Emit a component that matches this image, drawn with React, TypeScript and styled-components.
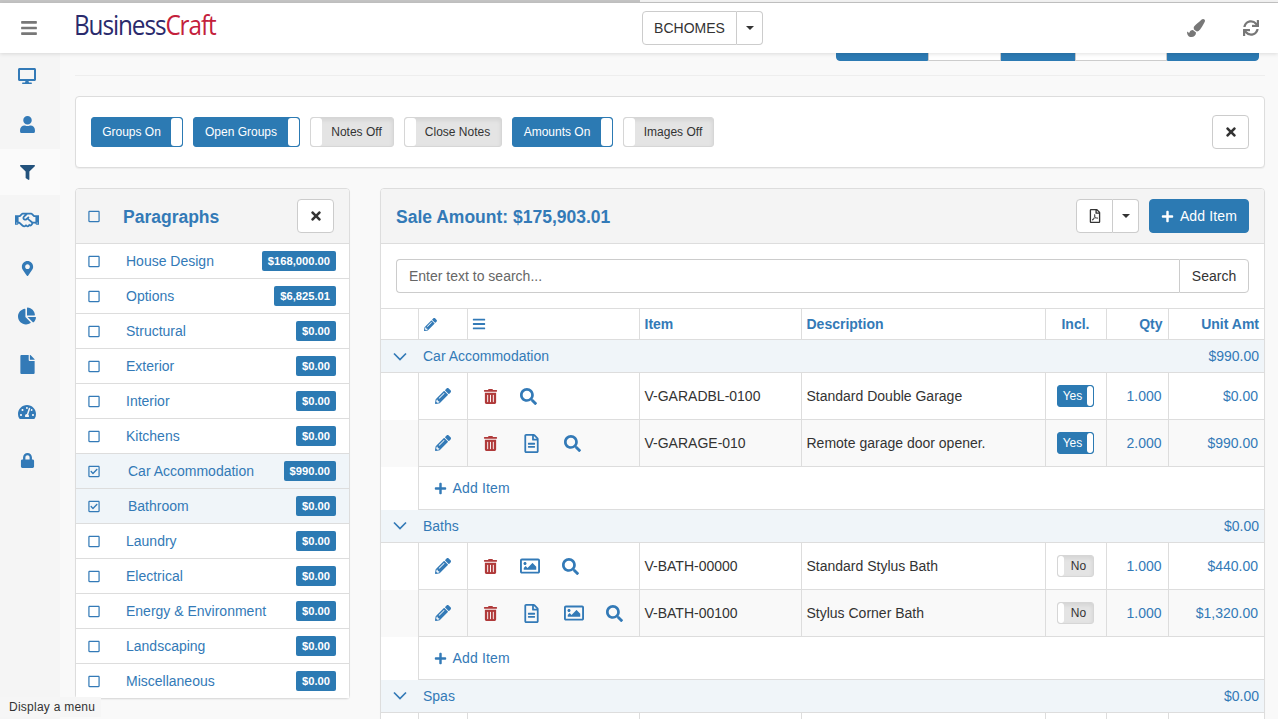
import React from "react";
import styled, { createGlobalStyle } from "styled-components";
import {
  FaBars,
  FaChartPie,
  FaDesktop,
  FaFile,
  FaFilter,
  FaLock,
  FaMapMarkerAlt,
  FaPaintBrush,
  FaPencilAlt,
  FaPlus,
  FaRegCheckSquare,
  FaRegFileAlt,
  FaRegFilePdf,
  FaRegHandshake,
  FaRegImage,
  FaRegSquare,
  FaSearch,
  FaSync,
  FaTachometerAlt,
  FaTimes,
  FaTrashAlt,
  FaUser,
} from "react-icons/fa";

const BLUE = "#2c7ab3";
const LINK = "#337ab7";
const BORDER = "#ddd";

const GlobalStyle = createGlobalStyle`
  html, body {
    margin: 0;
    height: 100%;
    overflow: hidden;
    background: #f9f9f9;
    font-family: "Liberation Sans", Arial, sans-serif;
    font-size: 14px;
    color: #333;
  }
  * { box-sizing: border-box; }
`;

const Page = styled.div`
  height: 100vh;
  display: flex;
  flex-direction: column;
  overflow: hidden;
  position: relative;
`;

const TopStrip = styled.div`
  height: 3px;
  flex: none;
  background: linear-gradient(to right, #c4c4c4 640px, #f2f2f2 640px);
  border-bottom: 1px solid #c4c4c4;
`;

const Navbar = styled.header`
  height: 50px;
  flex: none;
  background: #fff;
  box-shadow: 0 1px 4px rgba(0, 0, 0, 0.12);
  position: relative;
  z-index: 2;
  display: grid;
  grid-template-columns: 622px auto 1fr;
  align-items: center;
  padding: 0 19px 0 20px;
`;

const NavLeft = styled.div`
  display: flex;
  align-items: center;
  gap: 36px;
`;

const NavRight = styled.div`
  display: flex;
  justify-content: flex-end;
  align-items: center;
  gap: 38px;
  color: #777;
  font-size: 18px;
`;

const Burger = styled(FaBars)`
  color: #777;
  font-size: 18px;
`;

const Logo = styled.div`
  font-family: "Open Sans", "Liberation Sans", sans-serif;
  font-size: 27px;
  letter-spacing: -1.2px;
  line-height: 30px;
  margin-top: -6px;
  color: #2a2a6c;
  transform: scaleX(0.9);
  transform-origin: left center;
  & > span {
    color: #c4203b;
  }
`;

const Split = styled.div`
  display: flex;
  height: 34px;
`;

const SplitMain = styled.button<{ $w: number }>`
  width: ${(p) => p.$w}px;
  height: 34px;
  border: 1px solid #ccc;
  border-radius: 4px 0 0 4px;
  background: #fff;
  color: #333;
  font: inherit;
  padding: 0;
  display: flex;
  align-items: center;
  justify-content: center;
`;

const SplitCaret = styled.button`
  width: 26px;
  height: 34px;
  border: 1px solid #ccc;
  border-left: 0;
  border-radius: 0 4px 4px 0;
  background: #fff;
  padding: 0;
  display: flex;
  align-items: center;
  justify-content: center;
  &::after {
    content: "";
    border-top: 4px solid #333;
    border-left: 4px solid transparent;
    border-right: 4px solid transparent;
  }
`;

const Body = styled.div`
  flex: 1;
  min-height: 0;
  display: flex;
`;

const Sidebar = styled.nav`
  width: 60px;
  flex: none;
  background: #f5f5f5;
  margin-top: -2px;
  display: flex;
  flex-direction: column;
`;

const SideItem = styled.a<{ $active?: boolean; $size: number }>`
  height: 48px;
  padding-right: 6px;
  display: flex;
  align-items: center;
  justify-content: center;
  font-size: ${(p) => p.$size}px;
  color: ${(p) => (p.$active ? "#23527c" : LINK)};
  background: ${(p) => (p.$active ? "#fafafa" : "transparent")};
  border-top: 2px solid #f5f5f5;
`;

const Main = styled.main`
  flex: 1;
  min-width: 0;
  padding: 0 13px 0 15px;
`;

const ClippedBar = styled.div`
  height: 8px;
  overflow: hidden;
  display: flex;
  justify-content: flex-end;
  align-items: flex-end;
  padding-right: 6px;
`;

const TopButton = styled.button<{ $w: number; $on?: boolean }>`
  width: ${(p) => p.$w}px;
  height: 34px;
  flex: none;
  border: 1px solid ${(p) => (p.$on ? BLUE : "#ccc")};
  background: ${(p) => (p.$on ? BLUE : "#fff")};
  padding: 0;
  &:first-child {
    border-radius: 0 0 0 4px;
  }
  &:last-child {
    border-radius: 0 0 4px 0;
  }
`;

const Divider = styled.div`
  height: 1px;
  margin-top: 14px;
  background: #eee;
`;

const TogglePanel = styled.section`
  margin-top: 20px;
  height: 72px;
  background: #fff;
  border: 1px solid ${BORDER};
  border-radius: 4px;
  box-shadow: 0 1px 1px rgba(0, 0, 0, 0.05);
  display: flex;
  align-items: center;
  padding: 0 15px;
  gap: 10px;
`;

const Toggle = styled.div<{ $on?: boolean; $small?: boolean }>`
  height: ${(p) => (p.$small ? 22 : 30)}px;
  flex: none;
  display: flex;
  flex-direction: ${(p) => (p.$on ? "row" : "row-reverse")};
  align-items: stretch;
  border: 1px solid ${(p) => (p.$on ? BLUE : "#d6d6d6")};
  border-radius: 3px;
  overflow: hidden;
  font-size: 12px;
  background: ${(p) => (p.$on ? BLUE : "#e4e4e4")};
  color: ${(p) => (p.$on ? "#fff" : "#333")};
  box-shadow: ${(p) => (p.$on ? "none" : "inset 0 2px 4px rgba(0, 0, 0, 0.08)")};
`;

const ToggleText = styled.span<{ $w: number; $nudge?: boolean }>`
  width: ${(p) => p.$w}px;
  padding-right: ${(p) => (p.$nudge ? 2 : 0)}px;
  display: flex;
  align-items: center;
  justify-content: center;
`;

const ToggleHandle = styled.span<{ $small?: boolean }>`
  width: ${(p) => (p.$small ? 6 : 11)}px;
  background: #fff;
  border-radius: 3px;
`;

const Spacer = styled.div`
  flex: 1;
`;

const CloseButton = styled.button`
  width: 37px;
  height: 34px;
  background: #fff;
  border: 1px solid #ccc;
  border-radius: 4px;
  color: #333;
  font-size: 14px;
  padding: 0;
  display: flex;
  align-items: center;
  justify-content: center;
`;

const Columns = styled.div`
  margin-top: 20px;
  display: grid;
  grid-template-columns: 275px 1fr;
  gap: 30px;
  align-items: start;
`;

const Panel = styled.section`
  background: #fff;
  border: 1px solid ${BORDER};
  border-radius: 4px;
  box-shadow: 0 1px 1px rgba(0, 0, 0, 0.05);
`;

const PanelHead = styled.div`
  height: 55px;
  background: #f4f4f4;
  border-bottom: 1px solid ${BORDER};
  border-radius: 3px 3px 0 0;
  display: flex;
  align-items: center;
  padding: 0 15px 0 12px;
`;

const MainHead = styled(PanelHead)`
  padding: 0 15px;
  gap: 10px;
`;

const Title = styled.h3<{ $indent?: number }>`
  margin: 2px 0 0 ${(p) => p.$indent ?? 0}px;
  flex: 1;
  font-size: 17.5px;
  line-height: 20px;
  font-weight: 700;
  color: ${LINK};
`;

const Check = styled.span`
  width: 12px;
  flex: none;
  display: flex;
  color: ${LINK};
  font-size: 13px;
`;

const ParaRow = styled.div<{ $selected?: boolean }>`
  height: 35px;
  display: flex;
  align-items: center;
  padding: 0 13px 0 12px;
  color: ${LINK};
  background: ${(p) => (p.$selected ? "#f0f5f9" : "#fff")};
  border-bottom: 1px solid ${BORDER};
  &:last-child {
    height: 34px;
    border-bottom: 0;
  }
`;

const ParaName = styled.span<{ $selected?: boolean }>`
  flex: 1;
  margin-left: ${(p) => (p.$selected ? 28 : 26)}px;
`;

const Badge = styled.span`
  background: ${BLUE};
  color: #fff;
  font-size: 11.2px;
  font-weight: 700;
  line-height: 20px;
  height: 20px;
  padding: 0 6px;
  border-radius: 2px;
`;

const SearchRow = styled.div`
  padding: 15px;
  display: flex;
  height: 64px;
`;

const SearchInput = styled.input`
  flex: 1;
  min-width: 0;
  height: 34px;
  border: 1px solid #ccc;
  border-right: 0;
  border-radius: 4px 0 0 4px;
  padding: 0 12px;
  font: inherit;
  color: #333;
  background: #fff;
  &::placeholder {
    color: #666;
    opacity: 1;
  }
`;

const SearchButton = styled.button`
  width: 70px;
  height: 34px;
  border: 1px solid #ccc;
  border-radius: 0 4px 4px 0;
  background: #fff;
  color: #333;
  font: inherit;
  padding: 0;
`;

const AddButton = styled.button`
  width: 100px;
  height: 34px;
  border: 1px solid ${BLUE};
  border-radius: 4px;
  background: ${BLUE};
  color: #fff;
  font: inherit;
  letter-spacing: 0.15px;
  padding: 0;
  display: flex;
  align-items: center;
  justify-content: center;
  gap: 6px;
  & > svg {
    font-size: 13px;
  }
`;

const Table = styled.table`
  width: 100%;
  table-layout: fixed;
  border-collapse: collapse;
`;

const Th = styled.th<{ $align?: string }>`
  height: 31px;
  padding: 0 5px;
  border: 1px solid ${BORDER};
  border-left: 0;
  font-size: 14px;
  font-weight: 700;
  color: ${LINK};
  text-align: ${(p) => p.$align ?? "left"};
  &:last-child {
    border-right: 0;
  }
`;

const HeadIcon = styled.span`
  display: flex;
  font-size: 13px;
`;

const HeadBars = styled(FaBars)`
  font-size: 14px;
  margin-left: -1px;
`;

const GroupRow = styled.tr`
  background: #f0f5f9;
  & > td {
    height: 33px;
    padding: 0 5px;
    border-bottom: 1px solid ${BORDER};
    color: ${LINK};
  }
`;

const GroupTotal = styled.td`
  text-align: right;
`;

const Chevron = styled.svg`
  display: block;
  margin-left: 7px;
  width: 14px;
  height: 9px;
`;

const ItemRow = styled.tr<{ $striped?: boolean }>`
  background: ${(p) => (p.$striped ? "#f9f9f9" : "#fff")};
`;

const Td = styled.td<{ $align?: string; $blue?: boolean }>`
  height: 47px;
  padding: 0 ${(p) => (p.$blue ? 6 : 5)}px 0 5px;
  border: 1px solid ${BORDER};
  border-left: 0;
  text-align: ${(p) => p.$align ?? "left"};
  color: ${(p) => (p.$blue ? LINK : "#333")};
  white-space: nowrap;
  &:last-child {
    border-right: 0;
  }
`;

const BlankTd = styled(Td)`
  height: auto;
  border-top: 0;
  border-bottom: 0;
`;

const AddTd = styled(Td)`
  height: 43px;
  padding-left: 15px;
  padding-top: 2px;
  color: ${LINK};
`;

const AddLink = styled.a`
  display: inline-flex;
  align-items: center;
  gap: 6px;
  letter-spacing: 0.15px;
  & > svg {
    font-size: 13px;
  }
`;

const EditIcon = styled.span`
  display: flex;
  justify-content: center;
  color: ${LINK};
  font-size: 16px;
`;

const Actions = styled.div`
  display: flex;
  align-items: center;
  gap: 22px;
  padding-left: 10px;
  font-size: 17px;
  color: ${LINK};
`;

const TrashIcon = styled(FaTrashAlt)`
  color: #b03a3a;
  font-size: 15px;
`;

const NoteIcon = styled(FaRegFileAlt)`
  font-size: 19px;
  margin: 0 1px 0 2px;
`;

const PictureIcon = styled(FaRegImage)`
  font-size: 20px;
`;

const SmallToggleWrap = styled.div`
  display: flex;
  justify-content: center;
`;

const Tooltip = styled.div`
  position: absolute;
  left: 0;
  bottom: 2px;
  height: 20px;
  width: 101px;
  background: #f6f6f6;
  color: #333;
  font-size: 12px;
  letter-spacing: 0.25px;
  line-height: 20px;
  padding-left: 9px;
  z-index: 3;
`;

const sideIcons = [
  { icon: <FaDesktop />, size: 18 },
  { icon: <FaUser />, size: 17 },
  { icon: <FaFilter />, size: 15 },
  { icon: <FaRegHandshake />, size: 24 },
  { icon: <FaMapMarkerAlt />, size: 15 },
  { icon: <FaChartPie />, size: 18 },
  { icon: <FaFile />, size: 19 },
  { icon: <FaTachometerAlt />, size: 18 },
  { icon: <FaLock />, size: 15 },
];

const toggles = [
  { label: "Groups On", on: true, w: 79 },
  { label: "Open Groups", on: true, w: 94 },
  { label: "Notes Off", on: false, w: 71 },
  { label: "Close Notes", on: false, w: 85 },
  { label: "Amounts On", on: true, w: 88 },
  { label: "Images Off", on: false, w: 78 },
];

const paragraphs = [
  { name: "House Design", amount: "$168,000.00" },
  { name: "Options", amount: "$6,825.01" },
  { name: "Structural", amount: "$0.00" },
  { name: "Exterior", amount: "$0.00" },
  { name: "Interior", amount: "$0.00" },
  { name: "Kitchens", amount: "$0.00" },
  { name: "Car Accommodation", amount: "$990.00", selected: true },
  { name: "Bathroom", amount: "$0.00", selected: true },
  { name: "Laundry", amount: "$0.00" },
  { name: "Electrical", amount: "$0.00" },
  { name: "Energy & Environment", amount: "$0.00" },
  { name: "Landscaping", amount: "$0.00" },
  { name: "Miscellaneous", amount: "$0.00" },
];

const groups = [
  {
    name: "Car Accommodation",
    total: "$990.00",
    items: [
      { code: "V-GARADBL-0100", desc: "Standard Double Garage", incl: true, qty: "1.000", amt: "$0.00" },
      { code: "V-GARAGE-010", desc: "Remote garage door opener.", incl: true, qty: "2.000", amt: "$990.00", note: true },
    ],
  },
  {
    name: "Baths",
    total: "$0.00",
    items: [
      { code: "V-BATH-00000", desc: "Standard Stylus Bath", incl: false, qty: "1.000", amt: "$440.00", image: true },
      { code: "V-BATH-00100", desc: "Stylus Corner Bath", incl: false, qty: "1.000", amt: "$1,320.00", note: true, image: true },
    ],
  },
];

const GroupHeader = ({ name, total }: { name: string; total: string }) => (
  <GroupRow>
    <td>
      <Chevron viewBox="0 0 14 9">
        <path d="M1 1.5l6 6 6-6" fill="none" stroke={LINK} strokeWidth="1.7" />
      </Chevron>
    </td>
    <td colSpan={6}>{name}</td>
    <GroupTotal>{total}</GroupTotal>
  </GroupRow>
);

export default function App() {
  return (
    <Page>
      <GlobalStyle />
      <TopStrip />
      <Navbar>
        <NavLeft>
          <Burger />
          <Logo>
            Business<span>Craft</span>
          </Logo>
        </NavLeft>
        <Split>
          <SplitMain $w={95}>BCHOMES</SplitMain>
          <SplitCaret />
        </Split>
        <NavRight>
          <FaPaintBrush />
          <FaSync size={16} />
        </NavRight>
      </Navbar>
      <Body>
        <Sidebar>
          {sideIcons.map((s, i) => (
            <SideItem key={i} $active={i === 2} $size={s.size}>
              {s.icon}
            </SideItem>
          ))}
        </Sidebar>
        <Main>
          <ClippedBar>
            <TopButton $w={92} $on />
            <TopButton $w={73} />
            <TopButton $w={74} $on />
            <TopButton $w={92} />
            <TopButton $w={92} $on />
          </ClippedBar>
          <Divider />
          <TogglePanel>
            {toggles.map((t) => (
              <Toggle key={t.label} $on={t.on}>
                <ToggleText $w={t.w} $nudge={!t.on}>
                  {t.label}
                </ToggleText>
                <ToggleHandle />
              </Toggle>
            ))}
            <Spacer />
            <CloseButton>
              <FaTimes />
            </CloseButton>
          </TogglePanel>
          <Columns>
            <Panel>
              <PanelHead>
                <Check>
                  <FaRegSquare />
                </Check>
                <Title $indent={23}>Paragraphs</Title>
                <CloseButton>
                  <FaTimes />
                </CloseButton>
              </PanelHead>
              {paragraphs.map((p) => (
                <ParaRow key={p.name} $selected={p.selected}>
                  <Check>{p.selected ? <FaRegCheckSquare /> : <FaRegSquare />}</Check>
                  <ParaName $selected={p.selected}>{p.name}</ParaName>
                  <Badge>{p.amount}</Badge>
                </ParaRow>
              ))}
            </Panel>
            <Panel>
              <MainHead>
                <Title>Sale Amount: $175,903.01</Title>
                <Split>
                  <SplitMain $w={37}>
                    <FaRegFilePdf />
                  </SplitMain>
                  <SplitCaret />
                </Split>
                <AddButton>
                  <FaPlus />
                  Add Item
                </AddButton>
              </MainHead>
              <SearchRow>
                <SearchInput placeholder="Enter text to search..." />
                <SearchButton>Search</SearchButton>
              </SearchRow>
              <Table>
                <colgroup>
                  <col style={{ width: 37 }} />
                  <col style={{ width: 49 }} />
                  <col style={{ width: 172 }} />
                  <col style={{ width: 162 }} />
                  <col style={{ width: 244 }} />
                  <col style={{ width: 61 }} />
                  <col style={{ width: 62 }} />
                  <col style={{ width: 96 }} />
                </colgroup>
                <thead>
                  <tr>
                    <Th />
                    <Th>
                      <HeadIcon>
                        <FaPencilAlt />
                      </HeadIcon>
                    </Th>
                    <Th>
                      <HeadIcon>
                        <HeadBars />
                      </HeadIcon>
                    </Th>
                    <Th>Item</Th>
                    <Th>Description</Th>
                    <Th $align="center">Incl.</Th>
                    <Th $align="right">Qty</Th>
                    <Th $align="right">Unit Amt</Th>
                  </tr>
                </thead>
                <tbody>
                  {groups.map((g) => (
                    <React.Fragment key={g.name}>
                      <GroupHeader name={g.name} total={g.total} />
                      {g.items.map((it, i) => (
                        <ItemRow key={it.code} $striped={i === 1}>
                          <BlankTd />
                          <Td>
                            <EditIcon>
                              <FaPencilAlt />
                            </EditIcon>
                          </Td>
                          <Td>
                            <Actions>
                              <TrashIcon />
                              {it.note && <NoteIcon />}
                              {it.image && <PictureIcon />}
                              <FaSearch />
                            </Actions>
                          </Td>
                          <Td>{it.code}</Td>
                          <Td>{it.desc}</Td>
                          <Td>
                            <SmallToggleWrap>
                              <Toggle $on={it.incl} $small>
                                <ToggleText $w={29}>{it.incl ? "Yes" : "No"}</ToggleText>
                                <ToggleHandle $small />
                              </Toggle>
                            </SmallToggleWrap>
                          </Td>
                          <Td $align="right" $blue>
                            {it.qty}
                          </Td>
                          <Td $align="right" $blue>
                            {it.amt}
                          </Td>
                        </ItemRow>
                      ))}
                      <tr>
                        <BlankTd />
                        <AddTd colSpan={7}>
                          <AddLink>
                            <FaPlus />
                            Add Item
                          </AddLink>
                        </AddTd>
                      </tr>
                    </React.Fragment>
                  ))}
                  <GroupHeader name="Spas" total="$0.00" />
                  <ItemRow>
                    <BlankTd />
                    <Td />
                    <Td />
                    <Td />
                    <Td />
                    <Td />
                    <Td />
                    <Td />
                  </ItemRow>
                </tbody>
              </Table>
            </Panel>
          </Columns>
        </Main>
      </Body>
      <Tooltip>Display a menu</Tooltip>
    </Page>
  );
}
